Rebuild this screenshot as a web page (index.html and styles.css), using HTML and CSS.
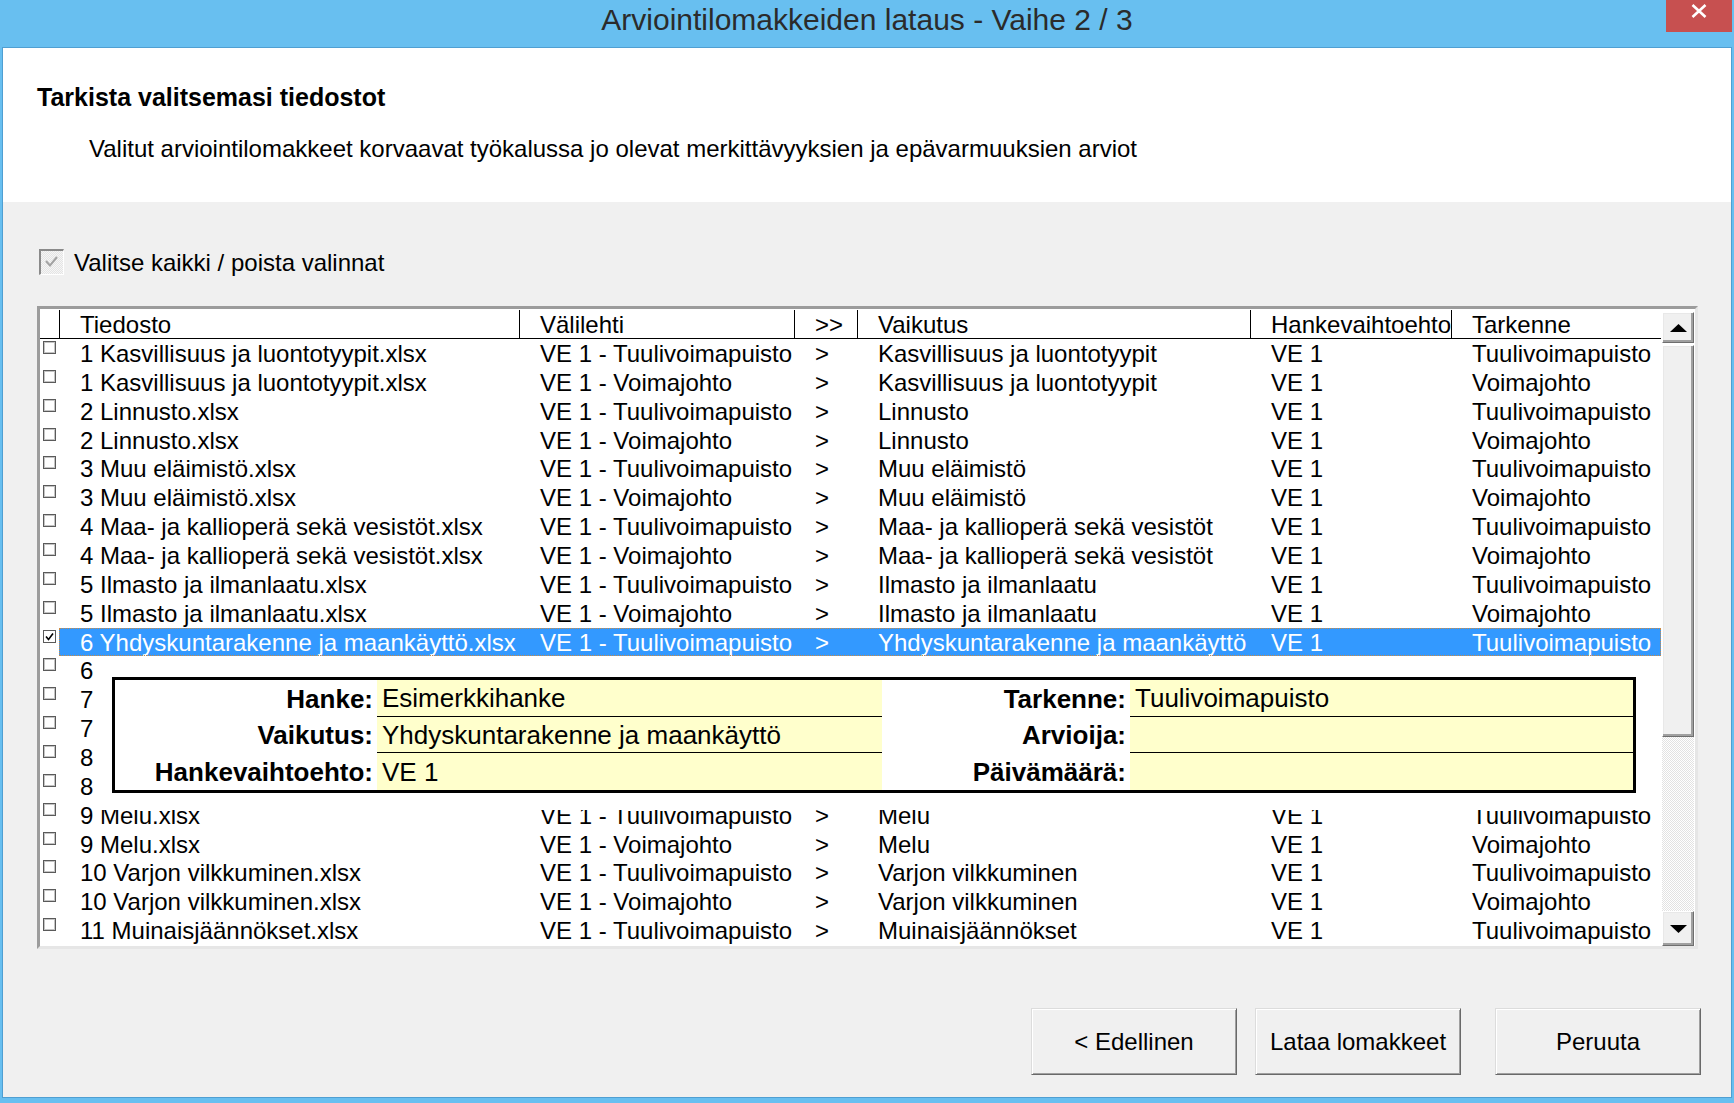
FILE: index.html
```html
<!DOCTYPE html>
<html lang="fi">
<head>
<meta charset="utf-8">
<title>Arviointilomakkeiden lataus - Vaihe 2 / 3</title>
<link rel="stylesheet" href="styles.css">
</head>
<body>
<div class="titlebar">
  <div class="title">Arviointilomakkeiden lataus - Vaihe 2 / 3</div>
  <div class="close"><svg width="16" height="14" viewBox="0 0 16 14"><path d="M1.5 1 L14.5 13 M14.5 1 L1.5 13" stroke="#fff" stroke-width="2.6" fill="none"/></svg></div>
</div>
<div class="window">
  <div class="intro">
    <h1>Tarkista valitsemasi tiedostot</h1>
    <p>Valitut arviointilomakkeet korvaavat työkalussa jo olevat merkittävyyksien ja epävarmuuksien arviot</p>
  </div>
  <div class="main">
    <div class="selectall">
      <span class="bigchk"><svg width="21" height="22" viewBox="0 0 21 22"><polyline points="5,10 9,14.5 16,6" fill="none" stroke="#a3a3a3" stroke-width="2"/></svg></span>
      <span class="sa-label">Valitse kaikki / poista valinnat</span>
    </div>
    <div class="list">
      <div class="grid">
        <div class="hdr">
          <span></span>
          <span class="h">Tiedosto</span>
          <span class="h">Välilehti</span>
          <span class="h">&gt;&gt;</span>
          <span class="h">Vaikutus</span>
          <span class="h">Hankevaihtoehto</span>
          <span class="h">Tarkenne</span>
        </div>
        <div class="row"><span class="chk"></span><div class="cells"><span>1 Kasvillisuus ja luontotyypit.xlsx</span><span>VE 1 - Tuulivoimapuisto</span><span>&gt;</span><span>Kasvillisuus ja luontotyypit</span><span>VE 1</span><span>Tuulivoimapuisto</span></div></div>
        <div class="row"><span class="chk"></span><div class="cells"><span>1 Kasvillisuus ja luontotyypit.xlsx</span><span>VE 1 - Voimajohto</span><span>&gt;</span><span>Kasvillisuus ja luontotyypit</span><span>VE 1</span><span>Voimajohto</span></div></div>
        <div class="row"><span class="chk"></span><div class="cells"><span>2 Linnusto.xlsx</span><span>VE 1 - Tuulivoimapuisto</span><span>&gt;</span><span>Linnusto</span><span>VE 1</span><span>Tuulivoimapuisto</span></div></div>
        <div class="row"><span class="chk"></span><div class="cells"><span>2 Linnusto.xlsx</span><span>VE 1 - Voimajohto</span><span>&gt;</span><span>Linnusto</span><span>VE 1</span><span>Voimajohto</span></div></div>
        <div class="row"><span class="chk"></span><div class="cells"><span>3 Muu eläimistö.xlsx</span><span>VE 1 - Tuulivoimapuisto</span><span>&gt;</span><span>Muu eläimistö</span><span>VE 1</span><span>Tuulivoimapuisto</span></div></div>
        <div class="row"><span class="chk"></span><div class="cells"><span>3 Muu eläimistö.xlsx</span><span>VE 1 - Voimajohto</span><span>&gt;</span><span>Muu eläimistö</span><span>VE 1</span><span>Voimajohto</span></div></div>
        <div class="row"><span class="chk"></span><div class="cells"><span>4 Maa- ja kallioperä sekä vesistöt.xlsx</span><span>VE 1 - Tuulivoimapuisto</span><span>&gt;</span><span>Maa- ja kallioperä sekä vesistöt</span><span>VE 1</span><span>Tuulivoimapuisto</span></div></div>
        <div class="row"><span class="chk"></span><div class="cells"><span>4 Maa- ja kallioperä sekä vesistöt.xlsx</span><span>VE 1 - Voimajohto</span><span>&gt;</span><span>Maa- ja kallioperä sekä vesistöt</span><span>VE 1</span><span>Voimajohto</span></div></div>
        <div class="row"><span class="chk"></span><div class="cells"><span>5 Ilmasto ja ilmanlaatu.xlsx</span><span>VE 1 - Tuulivoimapuisto</span><span>&gt;</span><span>Ilmasto ja ilmanlaatu</span><span>VE 1</span><span>Tuulivoimapuisto</span></div></div>
        <div class="row"><span class="chk"></span><div class="cells"><span>5 Ilmasto ja ilmanlaatu.xlsx</span><span>VE 1 - Voimajohto</span><span>&gt;</span><span>Ilmasto ja ilmanlaatu</span><span>VE 1</span><span>Voimajohto</span></div></div>
        <div class="row sel"><span class="chk on"><svg width="11" height="11" viewBox="0 0 11 11"><polyline points="2,5.5 4.5,8.5 9,2.5" fill="none" stroke="#000" stroke-width="1.6"/></svg></span><div class="cells"><span>6 Yhdyskuntarakenne ja maankäyttö.xlsx</span><span>VE 1 - Tuulivoimapuisto</span><span>&gt;</span><span>Yhdyskuntarakenne ja maankäyttö</span><span>VE 1</span><span>Tuulivoimapuisto</span></div></div>
        <div class="row"><span class="chk"></span><div class="cells"><span>6 Yhdyskuntarakenne ja maankäyttö.xlsx</span><span>VE 1 - Voimajohto</span><span>&gt;</span><span>Yhdyskuntarakenne ja maankäyttö</span><span>VE 1</span><span>Voimajohto</span></div></div>
        <div class="row"><span class="chk"></span><div class="cells"><span>7</span><span></span><span></span><span></span><span></span><span></span></div></div>
        <div class="row"><span class="chk"></span><div class="cells"><span>7</span><span></span><span></span><span></span><span></span><span></span></div></div>
        <div class="row"><span class="chk"></span><div class="cells"><span>8</span><span></span><span></span><span></span><span></span><span></span></div></div>
        <div class="row"><span class="chk"></span><div class="cells"><span>8</span><span></span><span></span><span></span><span></span><span></span></div></div>
        <div class="row"><span class="chk"></span><div class="cells"><span>9 Melu.xlsx</span><span>VE 1 - Tuulivoimapuisto</span><span>&gt;</span><span>Melu</span><span>VE 1</span><span>Tuulivoimapuisto</span></div></div>
        <div class="row"><span class="chk"></span><div class="cells"><span>9 Melu.xlsx</span><span>VE 1 - Voimajohto</span><span>&gt;</span><span>Melu</span><span>VE 1</span><span>Voimajohto</span></div></div>
        <div class="row"><span class="chk"></span><div class="cells"><span>10 Varjon vilkkuminen.xlsx</span><span>VE 1 - Tuulivoimapuisto</span><span>&gt;</span><span>Varjon vilkkuminen</span><span>VE 1</span><span>Tuulivoimapuisto</span></div></div>
        <div class="row"><span class="chk"></span><div class="cells"><span>10 Varjon vilkkuminen.xlsx</span><span>VE 1 - Voimajohto</span><span>&gt;</span><span>Varjon vilkkuminen</span><span>VE 1</span><span>Voimajohto</span></div></div>
        <div class="row"><span class="chk"></span><div class="cells"><span>11 Muinaisjäännökset.xlsx</span><span>VE 1 - Tuulivoimapuisto</span><span>&gt;</span><span>Muinaisjäännökset</span><span>VE 1</span><span>Tuulivoimapuisto</span></div></div>

        <div class="popup">
          <div class="ptable">
            <span class="plabel">Hanke:</span><span class="pval">Esimerkkihanke</span>
            <span class="plabel">Tarkenne:</span><span class="pval">Tuulivoimapuisto</span>
            <span class="plabel">Vaikutus:</span><span class="pval">Yhdyskuntarakenne ja maankäyttö</span>
            <span class="plabel">Arvioija:</span><span class="pval"></span>
            <span class="plabel">Hankevaihtoehto:</span><span class="pval last">VE 1</span>
            <span class="plabel">Päivämäärä:</span><span class="pval last"></span>
          </div>
        </div>
      </div>
      <div class="vscroll">
        <div class="sbtn up"><svg width="17" height="8" viewBox="0 0 17 8"><polygon points="0,8 8.5,0 17,8" fill="#000"/></svg></div>
        <div class="thumb"></div>
        <div class="track"></div>
        <div class="sbtn down"><svg width="17" height="8" viewBox="0 0 17 8"><polygon points="0,0 17,0 8.5,8" fill="#000"/></svg></div>
      </div>
    </div>
    <div class="actions">
      <button class="btn">&lt; Edellinen</button>
      <button class="btn b2">Lataa lomakkeet</button>
      <button class="btn b3">Peruuta</button>
    </div>
  </div>
</div>
</body>
</html>
```
FILE: styles.css
```css
html, body {
  margin: 0;
  padding: 0;
}
body {
  width: 1734px;
  height: 1103px;
  overflow: hidden;
  background: #68bff0;
  font-family: "Liberation Sans", Arial, sans-serif;
  color: #000;
}

.titlebar {
  height: 47px;
  display: grid;
  grid-template-columns: 1fr auto 1fr;
  align-items: start;
}
.title {
  grid-column: 2;
  font-size: 30px;
  line-height: 40px;
  color: #2b2b2b;
  white-space: nowrap;
}
.close {
  grid-column: 3;
  justify-self: end;
  margin-right: 2px;
  width: 66px;
  height: 32px;
  background: #c75050;
  display: flex;
  justify-content: center;
  align-items: flex-start;
  padding-top: 4px;
  box-sizing: border-box;
}

.window {
  margin: 0 2px;
  height: 1051px;
  box-sizing: border-box;
  border: 1px solid #4f9fd2;
  background: #f0f0f0;
  display: flex;
  flex-direction: column;
}

.intro {
  background: #fff;
  height: 154px;
  box-sizing: border-box;
  padding: 34px 0 0 34px;
}
.intro h1 {
  margin: 0;
  font-size: 25px;
  line-height: 30px;
  font-weight: bold;
}
.intro p {
  margin: 22px 0 0 52px;
  font-size: 24px;
  line-height: 30px;
}

.main {
  padding: 0 33px 0 34px;
}

.selectall {
  margin-top: 47px;
  padding-left: 2px;
  display: flex;
  align-items: flex-start;
  gap: 10px;
}
.bigchk {
  width: 25px;
  height: 26px;
  box-sizing: border-box;
  border-style: solid;
  border-width: 2px 1px 1px 2px;
  border-color: #8a8a8a #ffffff #ffffff #8a8a8a;
  background: repeating-conic-gradient(#e4e4e4 0 25%, #f6f6f6 0 50%) 0 0 / 2px 2px;
  display: flex;
}
.sa-label {
  font-size: 24px;
  line-height: 28px;
}

.list {
  margin-top: 29px;
  height: 643px;
  box-sizing: border-box;
  border-style: solid;
  border-width: 3px;
  border-color: #9c9c9c #e6e6e6 #e6e6e6 #9c9c9c;
  background: #fff;
  display: flex;
}
.grid {
  width: 1621px;
  position: relative;
  overflow: hidden;
}
.hdr {
  display: grid;
  grid-template-columns: 19px 460px 275px 63px 393px 201px 210px;
  height: 30px;
  box-sizing: border-box;
  border-bottom: 1px solid #000;
}
.hdr .h {
  border-left: 1px solid #000;
  margin-top: 1px;
  padding: 2px 0 0 20px;
  font-size: 24px;
  line-height: 26px;
  white-space: nowrap;
  overflow: hidden;
}

.row {
  display: grid;
  grid-template-columns: 19px 1fr;
  height: 28.87px;
}
.cells {
  display: grid;
  grid-template-columns: 460px 275px 63px 393px 201px 210px;
  font-size: 24px;
  line-height: 26.87px;
}
.cells span {
  padding: 2px 0 0 21px;
  white-space: nowrap;
  overflow: hidden;
}
.chk {
  margin: 2px 0 0 3px;
  width: 13px;
  height: 13px;
  box-sizing: border-box;
  border: 1px solid #5a5a5a;
  box-shadow: inset 0 0 0 1px #c4c4c4;
  background: #fff;
  display: flex;
  align-items: center;
  justify-content: center;
}
.chk.on {
  box-shadow: none;
}
.row.sel .cells {
  background: #3399ff;
  color: #fff;
  outline: 1px dotted #c98a45;
  outline-offset: -1px;
}

.popup {
  position: absolute;
  left: 56px;
  top: 347px;
  width: 1565px;
  height: 154px;
  background: #fff;
  padding: 21px 0 0 16px;
  box-sizing: border-box;
}
.ptable {
  width: 1524px;
  height: 116px;
  box-sizing: border-box;
  border: 3px solid #000;
  display: grid;
  grid-template-columns: 262px 505px 248px 1fr;
  grid-template-rows: repeat(3, 1fr);
  font-size: 26px;
}
.plabel {
  font-weight: bold;
  text-align: right;
  padding: 2px 4px 0 0;
  display: flex;
  align-items: center;
  justify-content: flex-end;
  white-space: nowrap;
}
.pval {
  background: #ffffcc;
  border-bottom: 1px solid #000;
  padding: 2px 0 0 5px;
  display: flex;
  align-items: center;
  white-space: nowrap;
}
.pval.last {
  border-bottom: none;
}

.vscroll {
  width: 34px;
  box-sizing: border-box;
  padding: 3px 1px 0 1px;
  display: flex;
  flex-direction: column;
}
.sbtn, .thumb {
  background: #f0f0f0;
  box-sizing: border-box;
  border: 1px solid;
  border-color: #ffffff #6e6e6e #6e6e6e #ffffff;
  box-shadow: inset -2px -2px 0 #a0a0a0, inset 1px 1px 0 #e8e8e8;
}
.sbtn {
  display: flex;
  align-items: center;
  justify-content: center;
}
.sbtn.up {
  height: 31px;
}
.thumb {
  margin-top: 2px;
  height: 392px;
}
.track {
  flex: 1;
  background: repeating-conic-gradient(#e2e2e2 0 25%, #ffffff 0 50%) 0 0 / 2px 2px;
}
.sbtn.down {
  height: 35px;
}

.actions {
  margin-top: 59px;
  margin-right: -3px;
  display: flex;
  justify-content: flex-end;
}
.btn {
  width: 206px;
  height: 67px;
  margin: 0;
  padding: 0;
  background: #f0f0f0;
  box-sizing: border-box;
  border: 1px solid;
  border-color: #dcdcdc #696969 #696969 #dcdcdc;
  box-shadow: inset 1px 1px 0 #ffffff, inset -1px -1px 0 #a0a0a0;
  font-family: "Liberation Sans", Arial, sans-serif;
  font-size: 24px;
  color: #000;
}
.btn.b2 {
  margin-left: 18px;
}
.btn.b3 {
  margin-left: 34px;
}
```
